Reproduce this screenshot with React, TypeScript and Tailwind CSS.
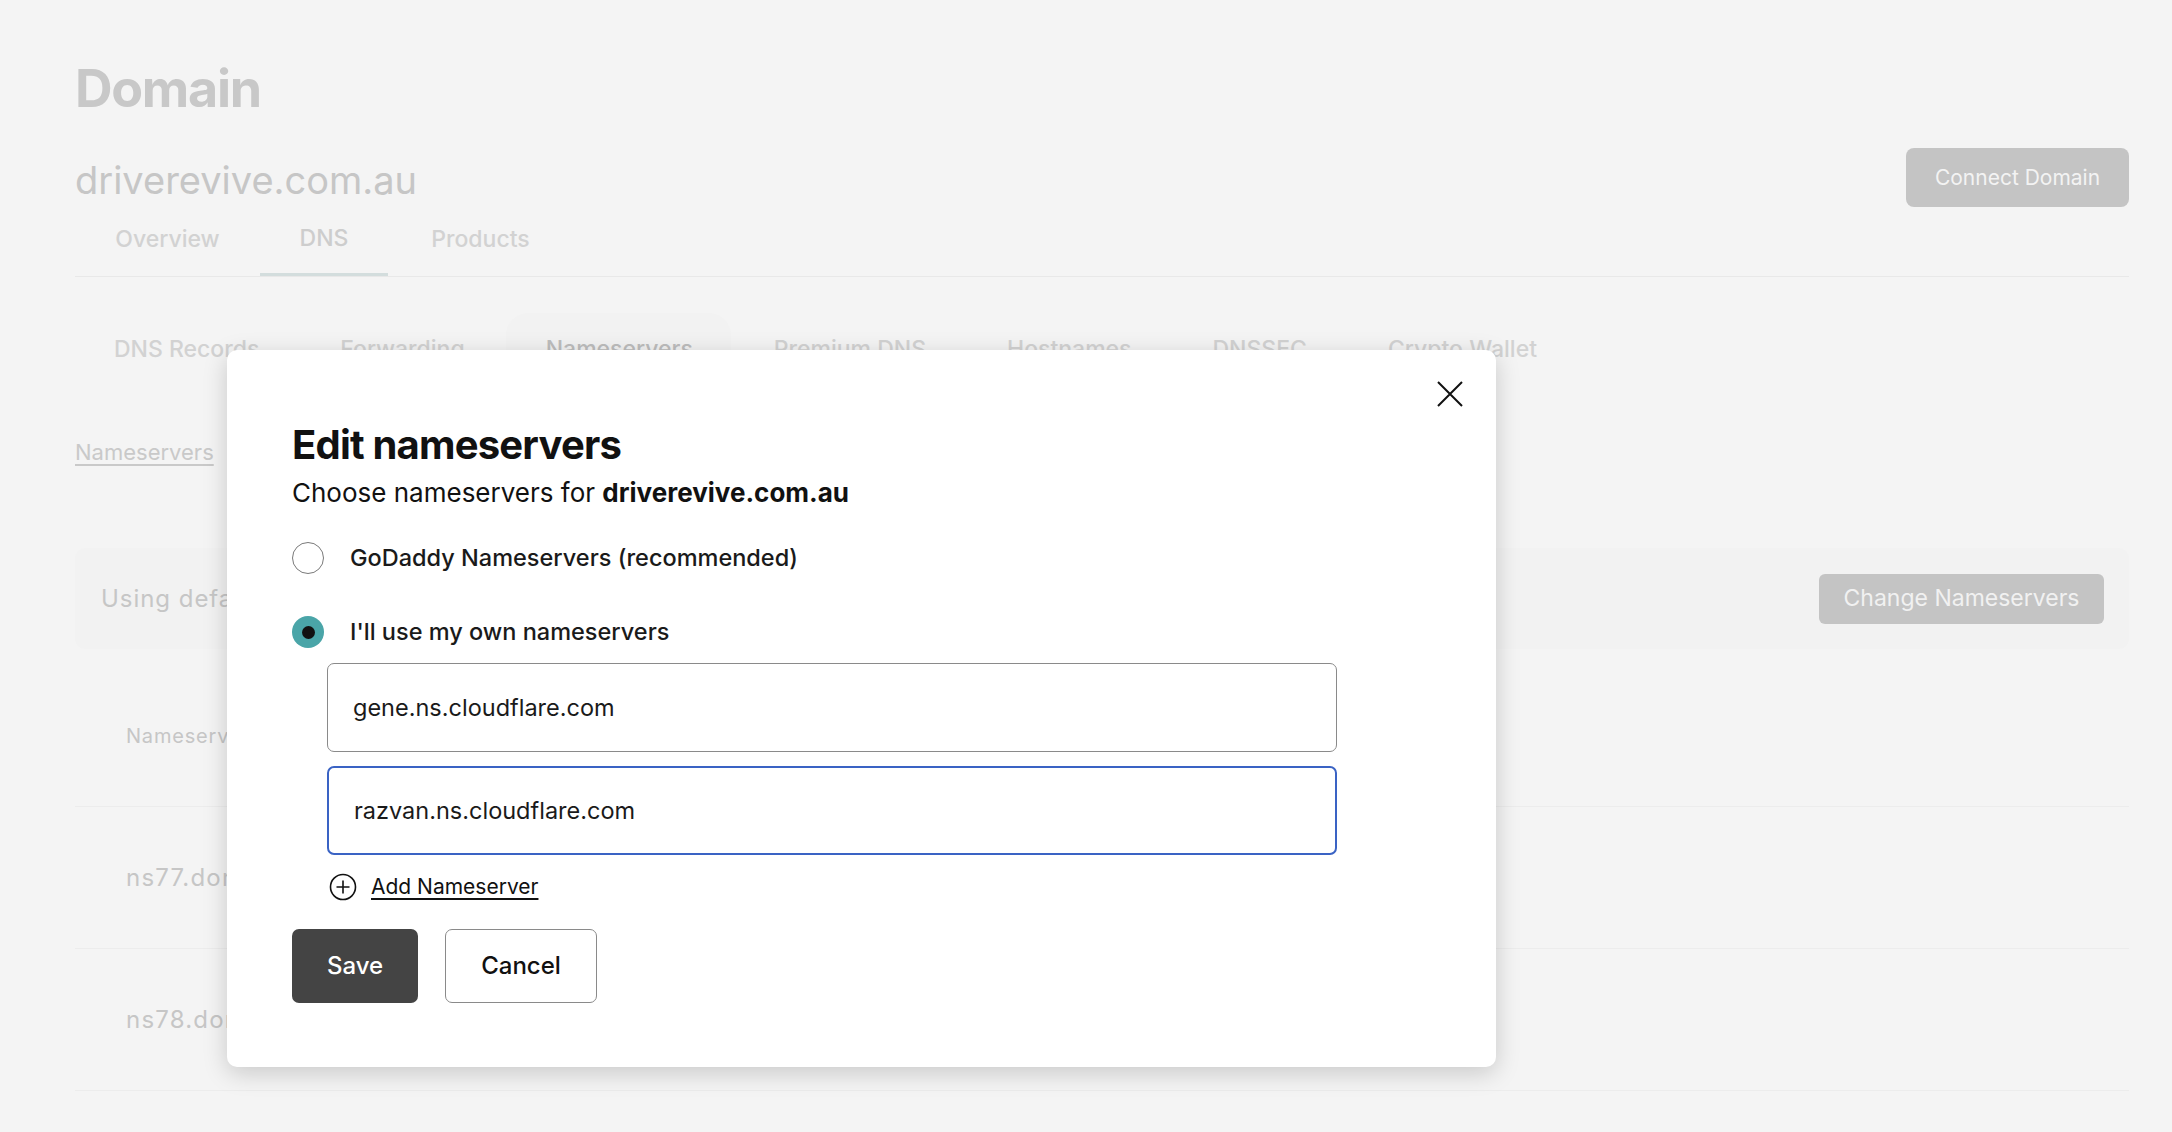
import React from 'react';

const font = { fontFamily: 'Inter, "Noto Sans", sans-serif' };

function CloseIcon() {
  return (
    <svg width="26" height="26" viewBox="0 0 26 26" fill="none" stroke="#111" strokeWidth="2">
      <path d="M1 1L25 25M25 1L1 25" />
    </svg>
  );
}

function PlusCircle() {
  return (
    <svg width="28" height="28" viewBox="0 0 28 28" fill="none" stroke="#111" strokeWidth="1.6">
      <circle cx="14" cy="14" r="12.5" />
      <path d="M14 7.5V20.5M7.5 14H20.5" />
    </svg>
  );
}

function Background() {
  const subTabs = ['DNS Records', 'Forwarding', 'Nameservers', 'Premium DNS', 'Hostnames', 'DNSSEC', 'Crypto Wallet'];
  return (
    <div className="pl-[75px] pr-[43px] pt-[57px] text-[#c8c8c8]">
      <h1 className="text-[52px] leading-[64px] font-bold tracking-tight">Domain</h1>
      <div className="flex items-center justify-between mt-[27px]">
        <div className="text-[38px] leading-[46px] text-[#c6c6c6]">driverevive.com.au</div>
        <button className="w-[223px] h-[59px] mb-[5px] rounded-[8px] bg-[#c4c4c4] text-[#f3f3f3] text-[21px]">Connect Domain</button>
      </div>

      {/* main tabs */}
      <div className="flex border-b border-[#e8e8e8] mt-[-9px]">
        <div className="w-[185px] h-[73px] flex items-center justify-center text-[23px] font-medium text-[#d2d2d2]">Overview</div>
        <div className="w-[128px] h-[73px] flex items-center justify-center text-[23px] font-medium text-[#cdcdcd] border-b-[3px] border-[#d3dddd]">DNS</div>
        <div className="w-[185px] h-[73px] flex items-center justify-center text-[23px] font-medium text-[#d2d2d2]">Products</div>
      </div>

      {/* sub tabs */}
      <div className="flex items-center mt-[36px] h-[72px] pl-[39px] gap-[81px]">
        {subTabs.map((t) => (
          <div
            key={t}
            className={
              t === 'Nameservers'
                ? 'pl-[40px] pr-[38px] -ml-[40px] -mr-[38px] h-[72px] flex items-center rounded-[22px] bg-[#f2f2f2] text-[23px] font-medium text-[#bdbdbd]'
                : 'text-[23px] font-medium text-[#d2d2d2]'
            }
          >
            {t}
          </div>
        ))}
      </div>

      <div className="mt-[51px] text-[22px] text-[#c9c9c9] underline underline-offset-4">Nameservers</div>

      <div className="mt-[79px] h-[101px] rounded-[10px] bg-[#f2f2f2] flex items-center justify-between pl-[26px] pr-[25px]">
        <div className="text-[24px] tracking-[0.04em] text-[#c6c6c6]">Using default nameservers</div>
        <button className="w-[285px] h-[50px] rounded-[6px] bg-[#c4c4c4] text-[#f1f1f1] text-[23px]">Change Nameservers</button>
      </div>

      <div className="mt-[16px]">
        <div className="h-[142px] flex items-center pl-[51px] border-b border-[#ececec] text-[20px] tracking-[0.04em] text-[#c6c6c6]">Nameserver</div>
        <div className="h-[142px] flex items-center pl-[51px] border-b border-[#ececec] text-[24px] tracking-[0.05em] text-[#c6c6c6]">ns77.domaincontrol.com</div>
        <div className="h-[142px] flex items-center pl-[51px] border-b border-[#ececec] text-[24px] tracking-[0.05em] text-[#c6c6c6]">ns78.domaincontrol.com</div>
      </div>
    </div>
  );
}

function Modal() {
  return (
    <div className="absolute left-[227px] top-[350px] w-[1269px] bg-white rounded-[10px] shadow-[0_6px_24px_rgba(0,0,0,0.18)] pl-[65px] pt-[70px] pb-[64px] text-[#111]">
      <div className="absolute top-[31px] right-[33px]">
        <CloseIcon />
      </div>
      <h2 className="text-[40px] leading-[50px] font-bold tracking-[-0.02em]">Edit nameservers</h2>
      <p className="text-[26px] leading-[34px] mt-[6px]">
        Choose nameservers for <span className="font-bold">driverevive.com.au</span>
      </p>

      <div className="flex items-center mt-[32px] gap-[26px]">
        <div className="w-[32px] h-[32px] rounded-full border-[1.5px] border-[#7a7a7a] bg-white" />
        <div className="text-[23.5px] leading-[32px] font-medium text-[#1a1a1a]">GoDaddy Nameservers (recommended)</div>
      </div>

      <div className="flex items-center mt-[42px] gap-[26px]">
        <div className="w-[32px] h-[32px] rounded-full bg-[#4aa5a8] flex items-center justify-center">
          <div className="w-[13px] h-[13px] rounded-full bg-[#111]" />
        </div>
        <div className="text-[23.5px] leading-[32px] font-medium text-[#1a1a1a]">I'll use my own nameservers</div>
      </div>

      <div className="ml-[35px] mt-[15px] w-[1010px] flex flex-col gap-[14px]">
        <div className="h-[89px] rounded-[7px] border-[1.5px] border-[#8a8a8a] flex items-center pl-[25px] text-[23.5px] text-[#1a1a1a]">
          gene.ns.cloudflare.com
        </div>
        <div className="h-[89px] rounded-[7px] border-[2px] border-[#3a63c4] flex items-center pl-[25px] text-[23.5px] text-[#1a1a1a]">
          razvan.ns.cloudflare.com
        </div>
      </div>

      <div className="ml-[37px] mt-[16px] flex items-center gap-[14px]">
        <PlusCircle />
        <span className="text-[21px] underline underline-offset-[4px] decoration-[1.5px]">Add Nameserver</span>
      </div>

      <div className="flex mt-[26px] gap-[27px]">
        <button className="w-[126px] h-[74px] rounded-[7px] bg-[#444444] text-white text-[24px] font-medium">Save</button>
        <button className="w-[152px] h-[74px] rounded-[7px] bg-white border-[1.5px] border-[#8a8a8a] text-[#111] text-[24px] font-medium">Cancel</button>
      </div>
    </div>
  );
}

export default function App() {
  return (
    <div className="relative w-[2172px] h-[1132px] overflow-hidden bg-[#f4f4f4]" style={font}>
      <Background />
      <Modal />
    </div>
  );
}
